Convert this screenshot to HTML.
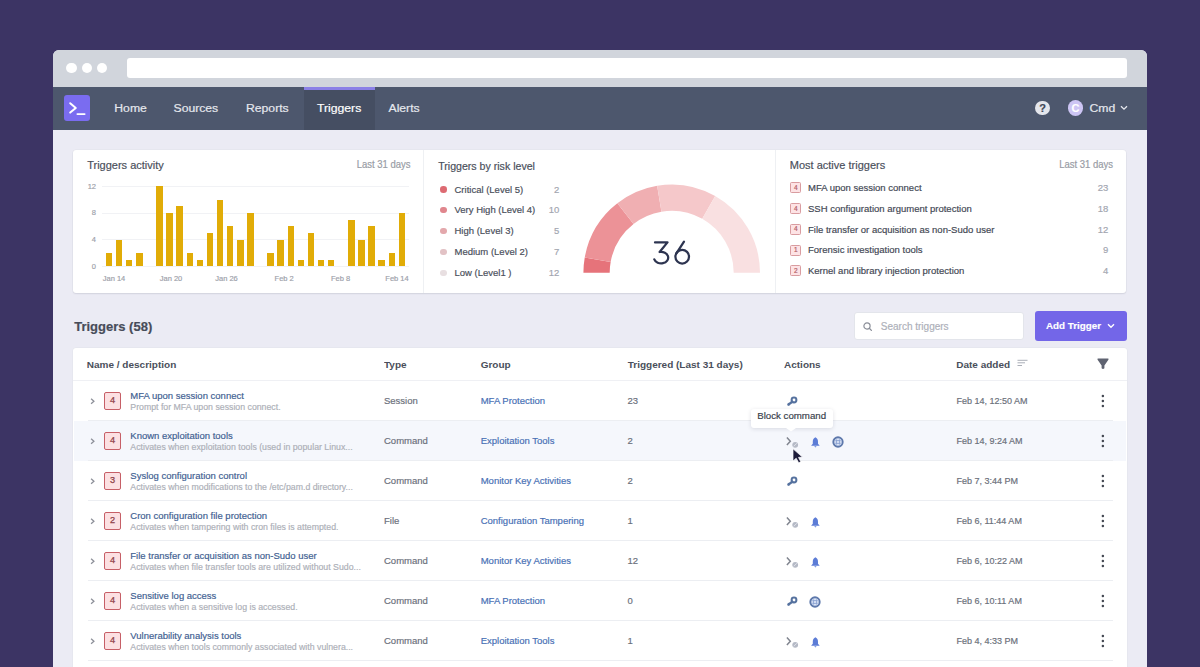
<!DOCTYPE html>
<html><head><meta charset="utf-8">
<style>
*{margin:0;padding:0;box-sizing:border-box}
html,body{width:1200px;height:667px;overflow:hidden}
body{background:#3c3464;font-family:"Liberation Sans",sans-serif;position:relative}
.t{position:absolute;white-space:nowrap;line-height:1;-webkit-text-stroke-width:0.18px}
.r{position:absolute}
svg{position:absolute;overflow:visible}
</style></head><body>
<div class="r" style="left:53px;top:50px;width:1094px;height:640px;background:#ebebf4;border-radius:6px 6px 0 0"></div>
<div class="r" style="left:53px;top:50px;width:1094px;height:36.5px;background:#d1d5dc;border-radius:6px 6px 0 0"></div>
<div class="r" style="left:66.4px;top:63.199999999999996px;width:10.2px;height:10.2px;background:#fff;border-radius:50%"></div>
<div class="r" style="left:81.5px;top:63.199999999999996px;width:10.2px;height:10.2px;background:#fff;border-radius:50%"></div>
<div class="r" style="left:96.60000000000001px;top:63.199999999999996px;width:10.2px;height:10.2px;background:#fff;border-radius:50%"></div>
<div class="r" style="left:126.8px;top:58.3px;width:1000px;height:20px;background:#fff;border-radius:3px"></div>
<div class="r" style="left:53px;top:86.5px;width:1094px;height:43px;background:#4d576d"></div>
<div class="r" style="left:304px;top:86.5px;width:71px;height:43px;background:#454e62"></div>
<div class="r" style="left:304px;top:86.5px;width:71px;height:3.5px;background:#8b80e6"></div>
<div class="r" style="left:63.5px;top:95.3px;width:26.3px;height:26px;background:#7a6cf0;border-radius:3px"></div>
<svg style="left:63.5px;top:95.3px" width="26" height="26"><path d="M6.2 8.2 L11.8 12.9 L6.2 17.6" fill="none" stroke="#fff" stroke-width="2" stroke-linecap="round" stroke-linejoin="round"/><path d="M13.4 19.1 H20.6" stroke="#fff" stroke-width="1.9" stroke-linecap="round"/></svg>
<div class="t" style="left:114.30px;top:101.57px;font-size:12.2px;color:#e6e8ee;font-weight:400;transform:scaleY(.9);transform-origin:0 0.8465em;-webkit-text-stroke:0.2px #e6e8ee">Home</div>
<div class="t" style="left:173.50px;top:101.57px;font-size:12.2px;color:#e6e8ee;font-weight:400;transform:scaleY(.9);transform-origin:0 0.8465em;-webkit-text-stroke:0.2px #e6e8ee">Sources</div>
<div class="t" style="left:246.00px;top:101.57px;font-size:12.2px;color:#e6e8ee;font-weight:400;transform:scaleY(.9);transform-origin:0 0.8465em;-webkit-text-stroke:0.2px #e6e8ee">Reports</div>
<div class="t" style="left:317.00px;top:101.57px;font-size:12.2px;color:#fff;font-weight:400;transform:scaleY(.9);transform-origin:0 0.8465em;-webkit-text-stroke:0.2px #fff">Triggers</div>
<div class="t" style="left:388.50px;top:101.57px;font-size:12.2px;color:#e6e8ee;font-weight:400;transform:scaleY(.9);transform-origin:0 0.8465em;-webkit-text-stroke:0.2px #e6e8ee">Alerts</div>
<div class="r" style="left:1035.3px;top:100.8px;width:14.4px;height:14.4px;background:#e4e6ec;border-radius:50%"></div>
<div class="t" style="left:942.50px;width:200px;text-align:center;top:103.09px;font-size:11px;color:#3f4756;font-weight:700;">?</div>
<div class="r" style="left:1067.9px;top:100.4px;width:15.2px;height:15.2px;background:#cdc5f4;border-radius:50%"></div>
<div class="t" style="left:975.60px;width:200px;text-align:center;top:102.69px;font-size:11px;color:#fff;font-weight:700;">C</div>
<div class="t" style="left:1089.50px;top:101.57px;font-size:12.2px;color:#e6e8ee;font-weight:400;transform:scaleY(.9);transform-origin:0 0.8465em;-webkit-text-stroke:0.2px #e6e8ee">Cmd</div>
<svg style="left:1119.5px;top:105px" width="8" height="6"><path d="M1 1.2 L4 4.2 L7 1.2" fill="none" stroke="#e6e8ee" stroke-width="1.3"/></svg>
<div class="r" style="left:73px;top:149.5px;width:1053px;height:143.3px;background:#fff;border-radius:3px;box-shadow:0 1px 1.5px rgba(40,40,80,.10),0 0 0 0.5px #e2e3ea"></div>
<div class="r" style="left:423px;top:149.5px;width:1px;height:143.3px;background:#eef0f3"></div>
<div class="r" style="left:775px;top:149.5px;width:1px;height:143.3px;background:#eef0f3"></div>
<div class="t" style="left:87.20px;top:159.99px;font-size:11px;color:#4a4f5b;font-weight:400;">Triggers activity</div>
<div class="t" style="right:789.50px;top:160.36px;font-size:9.5px;color:#989ca5;font-weight:400;transform:scaleY(1.08);transform-origin:0 0.8465em">Last 31 days</div>
<div class="t" style="left:438.20px;top:160.83px;font-size:10.6px;color:#4a4f5b;font-weight:400;">Triggers by risk level</div>
<div class="t" style="left:789.80px;top:159.99px;font-size:11px;color:#4a4f5b;font-weight:400;">Most active triggers</div>
<div class="t" style="right:87.00px;top:160.36px;font-size:9.5px;color:#989ca5;font-weight:400;transform:scaleY(1.08);transform-origin:0 0.8465em">Last 31 days</div>
<div class="r" style="left:101.6px;top:185.7px;width:307px;height:1px;background:#f1f2f5"></div>
<div class="t" style="right:1104.00px;top:182.55px;font-size:7.5px;color:#9da1aa;font-weight:400;">12</div>
<div class="r" style="left:101.6px;top:212.5px;width:307px;height:1px;background:#f1f2f5"></div>
<div class="t" style="right:1104.00px;top:209.35px;font-size:7.5px;color:#9da1aa;font-weight:400;">8</div>
<div class="r" style="left:101.6px;top:239.1px;width:307px;height:1px;background:#f1f2f5"></div>
<div class="t" style="right:1104.00px;top:235.95px;font-size:7.5px;color:#9da1aa;font-weight:400;">4</div>
<div class="r" style="left:101.6px;top:265.7px;width:307px;height:1px;background:#f1f2f5"></div>
<div class="t" style="right:1104.00px;top:262.55px;font-size:7.5px;color:#9da1aa;font-weight:400;">0</div>
<div class="r" style="left:105.7px;top:252.87px;width:6.6px;height:13.33px;background:#e1ac07"></div>
<div class="r" style="left:115.8px;top:239.53px;width:6.6px;height:26.67px;background:#e1ac07"></div>
<div class="r" style="left:125.9px;top:259.53px;width:6.6px;height:6.67px;background:#e1ac07"></div>
<div class="r" style="left:136.0px;top:252.87px;width:6.6px;height:13.33px;background:#e1ac07"></div>
<div class="r" style="left:156.2px;top:186.2px;width:6.6px;height:80.0px;background:#e1ac07"></div>
<div class="r" style="left:166.3px;top:212.87px;width:6.6px;height:53.33px;background:#e1ac07"></div>
<div class="r" style="left:176.4px;top:206.2px;width:6.6px;height:60.0px;background:#e1ac07"></div>
<div class="r" style="left:186.5px;top:252.87px;width:6.6px;height:13.33px;background:#e1ac07"></div>
<div class="r" style="left:196.6px;top:259.53px;width:6.6px;height:6.67px;background:#e1ac07"></div>
<div class="r" style="left:206.7px;top:232.87px;width:6.6px;height:33.33px;background:#e1ac07"></div>
<div class="r" style="left:216.8px;top:199.53px;width:6.6px;height:66.67px;background:#e1ac07"></div>
<div class="r" style="left:226.9px;top:226.2px;width:6.6px;height:40.0px;background:#e1ac07"></div>
<div class="r" style="left:237.0px;top:239.53px;width:6.6px;height:26.67px;background:#e1ac07"></div>
<div class="r" style="left:247.1px;top:212.87px;width:6.6px;height:53.33px;background:#e1ac07"></div>
<div class="r" style="left:267.3px;top:252.87px;width:6.6px;height:13.33px;background:#e1ac07"></div>
<div class="r" style="left:277.4px;top:239.53px;width:6.6px;height:26.67px;background:#e1ac07"></div>
<div class="r" style="left:287.5px;top:226.2px;width:6.6px;height:40.0px;background:#e1ac07"></div>
<div class="r" style="left:297.6px;top:259.53px;width:6.6px;height:6.67px;background:#e1ac07"></div>
<div class="r" style="left:307.7px;top:232.87px;width:6.6px;height:33.33px;background:#e1ac07"></div>
<div class="r" style="left:317.8px;top:259.53px;width:6.6px;height:6.67px;background:#e1ac07"></div>
<div class="r" style="left:327.9px;top:259.53px;width:6.6px;height:6.67px;background:#e1ac07"></div>
<div class="r" style="left:348.1px;top:219.53px;width:6.6px;height:46.67px;background:#e1ac07"></div>
<div class="r" style="left:358.2px;top:239.53px;width:6.6px;height:26.67px;background:#e1ac07"></div>
<div class="r" style="left:368.3px;top:226.2px;width:6.6px;height:40.0px;background:#e1ac07"></div>
<div class="r" style="left:378.4px;top:259.53px;width:6.6px;height:6.67px;background:#e1ac07"></div>
<div class="r" style="left:388.5px;top:252.87px;width:6.6px;height:13.33px;background:#e1ac07"></div>
<div class="r" style="left:398.6px;top:212.87px;width:6.6px;height:53.33px;background:#e1ac07"></div>
<div class="t" style="left:14.00px;width:200px;text-align:center;top:275.15px;font-size:7.5px;color:#9da1aa;font-weight:400;">Jan 14</div>
<div class="t" style="left:71.00px;width:200px;text-align:center;top:275.15px;font-size:7.5px;color:#9da1aa;font-weight:400;">Jan 20</div>
<div class="t" style="left:126.50px;width:200px;text-align:center;top:275.15px;font-size:7.5px;color:#9da1aa;font-weight:400;">Jan 26</div>
<div class="t" style="left:184.20px;width:200px;text-align:center;top:275.15px;font-size:7.5px;color:#9da1aa;font-weight:400;">Feb 2</div>
<div class="t" style="left:240.60px;width:200px;text-align:center;top:275.15px;font-size:7.5px;color:#9da1aa;font-weight:400;">Feb 8</div>
<div class="t" style="left:297.00px;width:200px;text-align:center;top:275.15px;font-size:7.5px;color:#9da1aa;font-weight:400;">Feb 14</div>
<div class="r" style="left:440.0px;top:186.0px;width:6.6px;height:6.6px;background:#dd6a72;border-radius:50%"></div>
<div class="t" style="left:454.50px;top:184.56px;font-size:9.5px;color:#4a4f5b;font-weight:400;">Critical (Level 5)</div>
<div class="t" style="right:640.60px;top:184.56px;font-size:9.5px;color:#a2a6b0;font-weight:400;">2</div>
<div class="r" style="left:440.0px;top:206.9px;width:6.6px;height:6.6px;background:#e0868d;border-radius:50%"></div>
<div class="t" style="left:454.50px;top:205.46px;font-size:9.5px;color:#4a4f5b;font-weight:400;">Very High (Level 4)</div>
<div class="t" style="right:640.60px;top:205.46px;font-size:9.5px;color:#a2a6b0;font-weight:400;">10</div>
<div class="r" style="left:440.0px;top:227.8px;width:6.6px;height:6.6px;background:#e3a8ac;border-radius:50%"></div>
<div class="t" style="left:454.50px;top:226.36px;font-size:9.5px;color:#4a4f5b;font-weight:400;">High (Level 3)</div>
<div class="t" style="right:640.60px;top:226.36px;font-size:9.5px;color:#a2a6b0;font-weight:400;">5</div>
<div class="r" style="left:440.0px;top:248.7px;width:6.6px;height:6.6px;background:#e2c2c5;border-radius:50%"></div>
<div class="t" style="left:454.50px;top:247.26px;font-size:9.5px;color:#4a4f5b;font-weight:400;">Medium (Level 2)</div>
<div class="t" style="right:640.60px;top:247.26px;font-size:9.5px;color:#a2a6b0;font-weight:400;">7</div>
<div class="r" style="left:440.0px;top:269.6px;width:6.6px;height:6.6px;background:#e8dfe1;border-radius:50%"></div>
<div class="t" style="left:454.50px;top:268.16px;font-size:9.5px;color:#4a4f5b;font-weight:400;">Low (Level1 )</div>
<div class="t" style="right:640.60px;top:268.16px;font-size:9.5px;color:#a2a6b0;font-weight:400;">12</div>
<svg style="left:0;top:0" width="1200" height="667"><path d="M583.40 272.80 A88.3 88.3 0 0 1 584.74 257.47 L610.64 262.03 A62 62 0 0 0 609.70 272.80 Z" fill="#e6737a"/><path d="M584.74 257.47 A88.3 88.3 0 0 1 617.34 203.22 L633.53 223.94 A62 62 0 0 0 610.64 262.03 Z" fill="#ec9297"/><path d="M617.34 203.22 A88.3 88.3 0 0 1 657.13 185.71 L661.47 211.65 A62 62 0 0 0 633.53 223.94 Z" fill="#f0afb2"/><path d="M657.13 185.71 A88.3 88.3 0 0 1 715.18 195.95 L702.23 218.84 A62 62 0 0 0 661.47 211.65 Z" fill="#f5c8ca"/><path d="M715.18 195.95 A88.3 88.3 0 0 1 760.00 272.80 L733.70 272.80 A62 62 0 0 0 702.23 218.84 Z" fill="#f9e0e1"/></svg>
<svg style="left:0;top:0" width="1200" height="667"><g fill="none" stroke="#2d3450" stroke-width="2.25" stroke-linecap="round" stroke-linejoin="round"><path d="M655 242.4 H667.5 L659.6 252 A7.1 5.75 0 1 1 654.3 259.3"/><path d="M684 241.6 L676.4 253.4"/><circle cx="682.2" cy="256.7" r="6.8"/></g></svg>
<div class="r" style="left:790.3px;top:182.2px;width:11.2px;height:11px;background:#fde3e5;border:1.1px solid #d99ca0;border-radius:1.5px"></div>
<div class="t" style="left:695.90px;width:200px;text-align:center;top:184.70px;font-size:6.5px;color:#b35f67;font-weight:400;-webkit-text-stroke:0.2px #b35f67">4</div>
<div class="t" style="left:808.00px;top:183.06px;font-size:9.5px;color:#434854;font-weight:400;">MFA upon session connect</div>
<div class="t" style="right:91.70px;top:183.06px;font-size:9.5px;color:#a2a6b0;font-weight:400;">23</div>
<div class="r" style="left:790.3px;top:203.0px;width:11.2px;height:11px;background:#fde3e5;border:1.1px solid #d99ca0;border-radius:1.5px"></div>
<div class="t" style="left:695.90px;width:200px;text-align:center;top:205.50px;font-size:6.5px;color:#b35f67;font-weight:400;-webkit-text-stroke:0.2px #b35f67">4</div>
<div class="t" style="left:808.00px;top:203.86px;font-size:9.5px;color:#434854;font-weight:400;">SSH configuration argument protection</div>
<div class="t" style="right:91.70px;top:203.86px;font-size:9.5px;color:#a2a6b0;font-weight:400;">18</div>
<div class="r" style="left:790.3px;top:223.8px;width:11.2px;height:11px;background:#fde3e5;border:1.1px solid #d99ca0;border-radius:1.5px"></div>
<div class="t" style="left:695.90px;width:200px;text-align:center;top:226.30px;font-size:6.5px;color:#b35f67;font-weight:400;-webkit-text-stroke:0.2px #b35f67">4</div>
<div class="t" style="left:808.00px;top:224.66px;font-size:9.5px;color:#434854;font-weight:400;">File transfer or acquisition as non-Sudo user</div>
<div class="t" style="right:91.70px;top:224.66px;font-size:9.5px;color:#a2a6b0;font-weight:400;">12</div>
<div class="r" style="left:790.3px;top:244.6px;width:11.2px;height:11px;background:#fde3e5;border:1.1px solid #d99ca0;border-radius:1.5px"></div>
<div class="t" style="left:695.90px;width:200px;text-align:center;top:247.10px;font-size:6.5px;color:#b35f67;font-weight:400;-webkit-text-stroke:0.2px #b35f67">1</div>
<div class="t" style="left:808.00px;top:245.46px;font-size:9.5px;color:#434854;font-weight:400;">Forensic investigation tools</div>
<div class="t" style="right:91.70px;top:245.46px;font-size:9.5px;color:#a2a6b0;font-weight:400;">9</div>
<div class="r" style="left:790.3px;top:265.4px;width:11.2px;height:11px;background:#fde3e5;border:1.1px solid #d99ca0;border-radius:1.5px"></div>
<div class="t" style="left:695.90px;width:200px;text-align:center;top:267.90px;font-size:6.5px;color:#b35f67;font-weight:400;-webkit-text-stroke:0.2px #b35f67">2</div>
<div class="t" style="left:808.00px;top:266.26px;font-size:9.5px;color:#434854;font-weight:400;">Kernel and library injection protection</div>
<div class="t" style="right:91.70px;top:266.26px;font-size:9.5px;color:#a2a6b0;font-weight:400;">4</div>
<div class="t" style="left:74.20px;top:319.50px;font-size:13px;color:#474c59;font-weight:700;">Triggers (58)</div>
<div class="r" style="left:853.5px;top:311.5px;width:170px;height:28.7px;background:#fff;border:1px solid #e3e5eb;border-radius:3px"></div>
<svg style="left:863px;top:321.8px" width="11" height="11"><circle cx="4" cy="4" r="3.1" fill="none" stroke="#8a8e98" stroke-width="1.2"/><path d="M6.3 6.3 L8.4 8.4" stroke="#8a8e98" stroke-width="1.3" stroke-linecap="round"/></svg>
<div class="t" style="left:880.80px;top:321.74px;font-size:10px;color:#adb0b9;font-weight:400;">Search triggers</div>
<div class="r" style="left:1034.7px;top:311.2px;width:92px;height:29.5px;background:#7366e8;border-radius:3px"></div>
<div class="t" style="left:1046.00px;top:321.10px;font-size:9.8px;color:#fff;font-weight:700;">Add Trigger</div>
<svg style="left:1106.5px;top:323px" width="8" height="6"><path d="M1 1.2 L4 4.2 L7 1.2" fill="none" stroke="#fff" stroke-width="1.4"/></svg>
<div class="r" style="left:73px;top:347.5px;width:1053.7px;height:330px;background:#fff;border-radius:3px 3px 0 0;box-shadow:0 0 0 0.5px #e2e4ea"></div>
<div class="r" style="left:73px;top:380px;width:1053.7px;height:1px;background:#eff0f4"></div>
<div class="t" style="left:86.80px;top:360.04px;font-size:10px;color:#4a4f5b;font-weight:700;-webkit-text-stroke-width:0;transform:scaleY(.93);transform-origin:0 0.8465em">Name / description</div>
<div class="t" style="left:384.00px;top:360.04px;font-size:10px;color:#4a4f5b;font-weight:700;-webkit-text-stroke-width:0;transform:scaleY(.93);transform-origin:0 0.8465em">Type</div>
<div class="t" style="left:480.70px;top:360.04px;font-size:10px;color:#4a4f5b;font-weight:700;-webkit-text-stroke-width:0;transform:scaleY(.93);transform-origin:0 0.8465em">Group</div>
<div class="t" style="left:627.70px;top:360.04px;font-size:10px;color:#4a4f5b;font-weight:700;-webkit-text-stroke-width:0;transform:scaleY(.93);transform-origin:0 0.8465em">Triggered (Last 31 days)</div>
<div class="t" style="left:784.00px;top:360.04px;font-size:10px;color:#4a4f5b;font-weight:700;-webkit-text-stroke-width:0;transform:scaleY(.93);transform-origin:0 0.8465em">Actions</div>
<div class="t" style="left:956.20px;top:360.04px;font-size:10px;color:#4a4f5b;font-weight:700;-webkit-text-stroke-width:0;transform:scaleY(.93);transform-origin:0 0.8465em">Date added</div>
<svg style="left:1017px;top:359px" width="12" height="9"><path d="M0.5 1.3 H10.5 M0.5 3.8 H8 M0.5 6.5 H5" stroke="#a2a6b0" stroke-width="0.9"/></svg>
<svg style="left:1097px;top:358.3px" width="14" height="13"><path d="M1.2 0.6 H10.8 Q12.1 0.7 11.4 1.8 L7.4 7.6 V10.2 Q6 11.8 4.6 10.2 V7.6 L0.6 1.8 Q-0.1 0.7 1.2 0.6 Z" fill="#5f6371"/></svg>
<svg style="left:90.3px;top:397.9px" width="6" height="8"><path d="M1.1 0.7 L3.9 3.2 L1.1 5.7" fill="none" stroke="#8d9099" stroke-width="1.3"/></svg>
<div class="r" style="left:103.7px;top:391.9px;width:17.6px;height:17.7px;background:#fce0e2;border:1.5px solid #c65f67;border-radius:2px"></div>
<div class="t" style="left:12.50px;width:200px;text-align:center;top:396.31px;font-size:9.2px;color:#8e3f47;font-weight:400;-webkit-text-stroke:0.25px #8e3f47">4</div>
<div class="t" style="left:130.30px;top:391.06px;font-size:9.5px;color:#3f5f92;font-weight:400;">MFA upon session connect</div>
<div class="t" style="left:130.30px;top:402.89px;font-size:8.75px;color:#adb0b8;font-weight:400;">Prompt for MFA upon session connect.</div>
<div class="t" style="left:384.00px;top:395.96px;font-size:9.5px;color:#6b707b;font-weight:400;">Session</div>
<div class="t" style="left:480.70px;top:395.96px;font-size:9.5px;color:#4870b5;font-weight:400;">MFA Protection</div>
<div class="t" style="left:627.50px;top:395.96px;font-size:9.5px;color:#6b707b;font-weight:400;">23</div>
<svg style="left:786px;top:394.5px" width="14" height="12"><circle cx="8" cy="5" r="2.4" fill="none" stroke="#56729f" stroke-width="2"/><path d="M6.3 6.8 L2.4 9.6" stroke="#56729f" stroke-width="2.4" stroke-linecap="round"/><path d="M2.2 8.2 L3.4 10.4" stroke="#56729f" stroke-width="1.6"/></svg>
<div class="t" style="left:956.50px;top:397.08px;font-size:9px;color:#6b707b;font-weight:400;">Feb 14, 12:50 AM</div>
<svg style="left:1100px;top:392.5px" width="6" height="16"><g fill="#444852"><circle cx="2.9" cy="3" r="1.25"/><circle cx="2.9" cy="8" r="1.25"/><circle cx="2.9" cy="13" r="1.25"/></g></svg>
<div class="r" style="left:73.5px;top:421.0px;width:1052.5px;height:39.5px;background:#f5f7fc"></div>
<div class="r" style="left:88px;top:420px;width:1024.5px;height:1px;background:#eceef2"></div>
<svg style="left:90.3px;top:437.9px" width="6" height="8"><path d="M1.1 0.7 L3.9 3.2 L1.1 5.7" fill="none" stroke="#8d9099" stroke-width="1.3"/></svg>
<div class="r" style="left:103.7px;top:431.9px;width:17.6px;height:17.7px;background:#fce0e2;border:1.5px solid #c65f67;border-radius:2px"></div>
<div class="t" style="left:12.50px;width:200px;text-align:center;top:436.31px;font-size:9.2px;color:#8e3f47;font-weight:400;-webkit-text-stroke:0.25px #8e3f47">4</div>
<div class="t" style="left:130.30px;top:431.06px;font-size:9.5px;color:#3f5f92;font-weight:400;">Known exploitation tools</div>
<div class="t" style="left:130.30px;top:442.89px;font-size:8.75px;color:#adb0b8;font-weight:400;">Activates when exploitation tools (used in popular Linux...</div>
<div class="t" style="left:384.00px;top:435.96px;font-size:9.5px;color:#6b707b;font-weight:400;">Command</div>
<div class="t" style="left:480.70px;top:435.96px;font-size:9.5px;color:#4870b5;font-weight:400;">Exploitation Tools</div>
<div class="t" style="left:627.50px;top:435.96px;font-size:9.5px;color:#6b707b;font-weight:400;">2</div>
<svg style="left:786px;top:436.5px" width="14" height="12"><path d="M0.9 0.6 L4.3 4.3 L0.9 8" fill="none" stroke="#80858f" stroke-width="1.5"/><circle cx="9.2" cy="7.8" r="2.9" fill="#b5bac6"/><path d="M7.6 9.3 L10.8 6.3" stroke="#e8eaf0" stroke-width="0.8"/></svg>
<svg style="left:810.6px;top:436.5px" width="10" height="12"><path d="M4.4 0.2 C2.2 1.2 1.8 3 1.8 4.8 V6.8 L0.1 8.7 H8.7 L7 6.8 V4.8 C7 3 6.6 1.2 4.4 0.2 Z" fill="#5c7cd6"/><path d="M3.2 9.2 H5.6 L4.4 10.6 Z" fill="#5c7cd6"/></svg>
<svg style="left:832.3px;top:435.5px" width="12" height="12"><circle cx="6" cy="6" r="4.7" fill="#d8e2f5" stroke="#5d78ab" stroke-width="1.9"/><path d="M4.4 3.4 V8.6 M7.6 3.4 V8.6 M3.4 4.6 H8.6 M3.4 7.4 H8.6" stroke="#8ba3d1" stroke-width="0.9"/></svg>
<div class="t" style="left:956.50px;top:437.08px;font-size:9px;color:#6b707b;font-weight:400;">Feb 14, 9:24 AM</div>
<svg style="left:1100px;top:432.5px" width="6" height="16"><g fill="#444852"><circle cx="2.9" cy="3" r="1.25"/><circle cx="2.9" cy="8" r="1.25"/><circle cx="2.9" cy="13" r="1.25"/></g></svg>
<div class="r" style="left:88px;top:460px;width:1024.5px;height:1px;background:#eceef2"></div>
<svg style="left:90.3px;top:477.9px" width="6" height="8"><path d="M1.1 0.7 L3.9 3.2 L1.1 5.7" fill="none" stroke="#8d9099" stroke-width="1.3"/></svg>
<div class="r" style="left:103.7px;top:471.9px;width:17.6px;height:17.7px;background:#fce0e2;border:1.5px solid #c65f67;border-radius:2px"></div>
<div class="t" style="left:12.50px;width:200px;text-align:center;top:476.31px;font-size:9.2px;color:#8e3f47;font-weight:400;-webkit-text-stroke:0.25px #8e3f47">3</div>
<div class="t" style="left:130.30px;top:471.06px;font-size:9.5px;color:#3f5f92;font-weight:400;">Syslog configuration control</div>
<div class="t" style="left:130.30px;top:482.89px;font-size:8.75px;color:#adb0b8;font-weight:400;">Activates when modifications to the /etc/pam.d directory...</div>
<div class="t" style="left:384.00px;top:475.96px;font-size:9.5px;color:#6b707b;font-weight:400;">Command</div>
<div class="t" style="left:480.70px;top:475.96px;font-size:9.5px;color:#4870b5;font-weight:400;">Monitor Key Activities</div>
<div class="t" style="left:627.50px;top:475.96px;font-size:9.5px;color:#6b707b;font-weight:400;">2</div>
<svg style="left:786px;top:474.5px" width="14" height="12"><circle cx="8" cy="5" r="2.4" fill="none" stroke="#56729f" stroke-width="2"/><path d="M6.3 6.8 L2.4 9.6" stroke="#56729f" stroke-width="2.4" stroke-linecap="round"/><path d="M2.2 8.2 L3.4 10.4" stroke="#56729f" stroke-width="1.6"/></svg>
<div class="t" style="left:956.50px;top:477.08px;font-size:9px;color:#6b707b;font-weight:400;">Feb 7, 3:44 PM</div>
<svg style="left:1100px;top:472.5px" width="6" height="16"><g fill="#444852"><circle cx="2.9" cy="3" r="1.25"/><circle cx="2.9" cy="8" r="1.25"/><circle cx="2.9" cy="13" r="1.25"/></g></svg>
<div class="r" style="left:88px;top:500px;width:1024.5px;height:1px;background:#eceef2"></div>
<svg style="left:90.3px;top:517.9px" width="6" height="8"><path d="M1.1 0.7 L3.9 3.2 L1.1 5.7" fill="none" stroke="#8d9099" stroke-width="1.3"/></svg>
<div class="r" style="left:103.7px;top:511.9px;width:17.6px;height:17.7px;background:#fce0e2;border:1.5px solid #c65f67;border-radius:2px"></div>
<div class="t" style="left:12.50px;width:200px;text-align:center;top:516.31px;font-size:9.2px;color:#8e3f47;font-weight:400;-webkit-text-stroke:0.25px #8e3f47">2</div>
<div class="t" style="left:130.30px;top:511.06px;font-size:9.5px;color:#3f5f92;font-weight:400;">Cron configuration file protection</div>
<div class="t" style="left:130.30px;top:522.89px;font-size:8.75px;color:#adb0b8;font-weight:400;">Activates when tampering with cron files is attempted.</div>
<div class="t" style="left:384.00px;top:515.96px;font-size:9.5px;color:#6b707b;font-weight:400;">File</div>
<div class="t" style="left:480.70px;top:515.96px;font-size:9.5px;color:#4870b5;font-weight:400;">Configuration Tampering</div>
<div class="t" style="left:627.50px;top:515.96px;font-size:9.5px;color:#6b707b;font-weight:400;">1</div>
<svg style="left:786px;top:516.5px" width="14" height="12"><path d="M0.9 0.6 L4.3 4.3 L0.9 8" fill="none" stroke="#80858f" stroke-width="1.5"/><circle cx="9.2" cy="7.8" r="2.9" fill="#b5bac6"/><path d="M7.6 9.3 L10.8 6.3" stroke="#e8eaf0" stroke-width="0.8"/></svg>
<svg style="left:810.6px;top:516.5px" width="10" height="12"><path d="M4.4 0.2 C2.2 1.2 1.8 3 1.8 4.8 V6.8 L0.1 8.7 H8.7 L7 6.8 V4.8 C7 3 6.6 1.2 4.4 0.2 Z" fill="#5c7cd6"/><path d="M3.2 9.2 H5.6 L4.4 10.6 Z" fill="#5c7cd6"/></svg>
<div class="t" style="left:956.50px;top:517.08px;font-size:9px;color:#6b707b;font-weight:400;">Feb 6, 11:44 AM</div>
<svg style="left:1100px;top:512.5px" width="6" height="16"><g fill="#444852"><circle cx="2.9" cy="3" r="1.25"/><circle cx="2.9" cy="8" r="1.25"/><circle cx="2.9" cy="13" r="1.25"/></g></svg>
<div class="r" style="left:88px;top:540px;width:1024.5px;height:1px;background:#eceef2"></div>
<svg style="left:90.3px;top:557.9px" width="6" height="8"><path d="M1.1 0.7 L3.9 3.2 L1.1 5.7" fill="none" stroke="#8d9099" stroke-width="1.3"/></svg>
<div class="r" style="left:103.7px;top:551.9px;width:17.6px;height:17.7px;background:#fce0e2;border:1.5px solid #c65f67;border-radius:2px"></div>
<div class="t" style="left:12.50px;width:200px;text-align:center;top:556.31px;font-size:9.2px;color:#8e3f47;font-weight:400;-webkit-text-stroke:0.25px #8e3f47">4</div>
<div class="t" style="left:130.30px;top:551.06px;font-size:9.5px;color:#3f5f92;font-weight:400;">File transfer or acquisition as non-Sudo user</div>
<div class="t" style="left:130.30px;top:562.89px;font-size:8.75px;color:#adb0b8;font-weight:400;">Activates when file transfer tools are utilized without Sudo...</div>
<div class="t" style="left:384.00px;top:555.96px;font-size:9.5px;color:#6b707b;font-weight:400;">Command</div>
<div class="t" style="left:480.70px;top:555.96px;font-size:9.5px;color:#4870b5;font-weight:400;">Monitor Key Activities</div>
<div class="t" style="left:627.50px;top:555.96px;font-size:9.5px;color:#6b707b;font-weight:400;">12</div>
<svg style="left:786px;top:556.5px" width="14" height="12"><path d="M0.9 0.6 L4.3 4.3 L0.9 8" fill="none" stroke="#80858f" stroke-width="1.5"/><circle cx="9.2" cy="7.8" r="2.9" fill="#b5bac6"/><path d="M7.6 9.3 L10.8 6.3" stroke="#e8eaf0" stroke-width="0.8"/></svg>
<svg style="left:810.6px;top:556.5px" width="10" height="12"><path d="M4.4 0.2 C2.2 1.2 1.8 3 1.8 4.8 V6.8 L0.1 8.7 H8.7 L7 6.8 V4.8 C7 3 6.6 1.2 4.4 0.2 Z" fill="#5c7cd6"/><path d="M3.2 9.2 H5.6 L4.4 10.6 Z" fill="#5c7cd6"/></svg>
<div class="t" style="left:956.50px;top:557.08px;font-size:9px;color:#6b707b;font-weight:400;">Feb 6, 10:22 AM</div>
<svg style="left:1100px;top:552.5px" width="6" height="16"><g fill="#444852"><circle cx="2.9" cy="3" r="1.25"/><circle cx="2.9" cy="8" r="1.25"/><circle cx="2.9" cy="13" r="1.25"/></g></svg>
<div class="r" style="left:88px;top:580px;width:1024.5px;height:1px;background:#eceef2"></div>
<svg style="left:90.3px;top:597.9px" width="6" height="8"><path d="M1.1 0.7 L3.9 3.2 L1.1 5.7" fill="none" stroke="#8d9099" stroke-width="1.3"/></svg>
<div class="r" style="left:103.7px;top:591.9px;width:17.6px;height:17.7px;background:#fce0e2;border:1.5px solid #c65f67;border-radius:2px"></div>
<div class="t" style="left:12.50px;width:200px;text-align:center;top:596.31px;font-size:9.2px;color:#8e3f47;font-weight:400;-webkit-text-stroke:0.25px #8e3f47">4</div>
<div class="t" style="left:130.30px;top:591.06px;font-size:9.5px;color:#3f5f92;font-weight:400;">Sensitive log access</div>
<div class="t" style="left:130.30px;top:602.89px;font-size:8.75px;color:#adb0b8;font-weight:400;">Activates when a sensitive log is accessed.</div>
<div class="t" style="left:384.00px;top:595.96px;font-size:9.5px;color:#6b707b;font-weight:400;">Command</div>
<div class="t" style="left:480.70px;top:595.96px;font-size:9.5px;color:#4870b5;font-weight:400;">MFA Protection</div>
<div class="t" style="left:627.50px;top:595.96px;font-size:9.5px;color:#6b707b;font-weight:400;">0</div>
<svg style="left:786px;top:594.5px" width="14" height="12"><circle cx="8" cy="5" r="2.4" fill="none" stroke="#56729f" stroke-width="2"/><path d="M6.3 6.8 L2.4 9.6" stroke="#56729f" stroke-width="2.4" stroke-linecap="round"/><path d="M2.2 8.2 L3.4 10.4" stroke="#56729f" stroke-width="1.6"/></svg>
<svg style="left:808.8px;top:595.5px" width="12" height="12"><circle cx="6" cy="6" r="4.7" fill="#d8e2f5" stroke="#5d78ab" stroke-width="1.9"/><path d="M4.4 3.4 V8.6 M7.6 3.4 V8.6 M3.4 4.6 H8.6 M3.4 7.4 H8.6" stroke="#8ba3d1" stroke-width="0.9"/></svg>
<div class="t" style="left:956.50px;top:597.08px;font-size:9px;color:#6b707b;font-weight:400;">Feb 6, 10:11 AM</div>
<svg style="left:1100px;top:592.5px" width="6" height="16"><g fill="#444852"><circle cx="2.9" cy="3" r="1.25"/><circle cx="2.9" cy="8" r="1.25"/><circle cx="2.9" cy="13" r="1.25"/></g></svg>
<div class="r" style="left:88px;top:620px;width:1024.5px;height:1px;background:#eceef2"></div>
<div class="r" style="left:88px;top:660px;width:1024.5px;height:1px;background:#eceef2"></div>
<svg style="left:90.3px;top:637.9px" width="6" height="8"><path d="M1.1 0.7 L3.9 3.2 L1.1 5.7" fill="none" stroke="#8d9099" stroke-width="1.3"/></svg>
<div class="r" style="left:103.7px;top:631.9px;width:17.6px;height:17.7px;background:#fce0e2;border:1.5px solid #c65f67;border-radius:2px"></div>
<div class="t" style="left:12.50px;width:200px;text-align:center;top:636.31px;font-size:9.2px;color:#8e3f47;font-weight:400;-webkit-text-stroke:0.25px #8e3f47">4</div>
<div class="t" style="left:130.30px;top:631.06px;font-size:9.5px;color:#3f5f92;font-weight:400;">Vulnerability analysis tools</div>
<div class="t" style="left:130.30px;top:642.89px;font-size:8.75px;color:#adb0b8;font-weight:400;">Activates when tools commonly associated with vulnera...</div>
<div class="t" style="left:384.00px;top:635.96px;font-size:9.5px;color:#6b707b;font-weight:400;">Command</div>
<div class="t" style="left:480.70px;top:635.96px;font-size:9.5px;color:#4870b5;font-weight:400;">Exploitation Tools</div>
<div class="t" style="left:627.50px;top:635.96px;font-size:9.5px;color:#6b707b;font-weight:400;">1</div>
<svg style="left:786px;top:636.5px" width="14" height="12"><path d="M0.9 0.6 L4.3 4.3 L0.9 8" fill="none" stroke="#80858f" stroke-width="1.5"/><circle cx="9.2" cy="7.8" r="2.9" fill="#b5bac6"/><path d="M7.6 9.3 L10.8 6.3" stroke="#e8eaf0" stroke-width="0.8"/></svg>
<svg style="left:810.6px;top:636.5px" width="10" height="12"><path d="M4.4 0.2 C2.2 1.2 1.8 3 1.8 4.8 V6.8 L0.1 8.7 H8.7 L7 6.8 V4.8 C7 3 6.6 1.2 4.4 0.2 Z" fill="#5c7cd6"/><path d="M3.2 9.2 H5.6 L4.4 10.6 Z" fill="#5c7cd6"/></svg>
<div class="t" style="left:956.50px;top:637.08px;font-size:9px;color:#6b707b;font-weight:400;">Feb 4, 4:33 PM</div>
<svg style="left:1100px;top:632.5px" width="6" height="16"><g fill="#444852"><circle cx="2.9" cy="3" r="1.25"/><circle cx="2.9" cy="8" r="1.25"/><circle cx="2.9" cy="13" r="1.25"/></g></svg>
<div class="r" style="left:750.8px;top:408.6px;width:82.2px;height:19.2px;background:#fff;border-radius:3px;box-shadow:0 1px 4px rgba(40,45,70,.14)"></div>
<svg style="left:786px;top:427.6px" width="10" height="4"><path d="M0 0 L5 3.6 L10 0 Z" fill="#fff"/></svg>
<div class="t" style="left:757.20px;top:411.39px;font-size:9.7px;color:#3a3f4c;font-weight:400;">Block command</div>
<svg style="left:792.3px;top:448px" width="12" height="16"><path d="M1 0.8 V13 L4.2 10.2 L6.7 14.8 L8.8 13.8 L6.5 9.4 L10.4 9.1 Z" fill="#1d1c3a" stroke="#fff" stroke-width="0.7" stroke-linejoin="round"/></svg>
</body></html>
